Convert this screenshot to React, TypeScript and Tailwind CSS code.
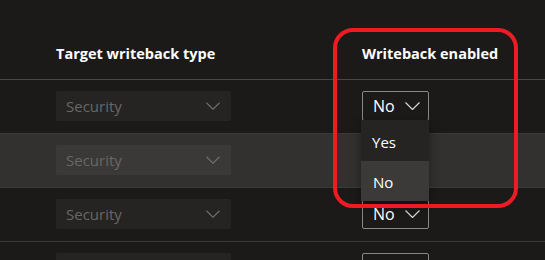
import React from 'react';

const rows = [0, 1, 2, 3];

function Chevron({ className }: { className: string }) {
  return (
    <svg width="15" height="8" viewBox="0 0 15 8" className={className} fill="none">
      <path d="M0.5 0.5 L7.5 7.5 L14.5 0.5" stroke="currentColor" strokeWidth="1.2" />
    </svg>
  );
}

function TypeSelect({ hovered }: { hovered: boolean }) {
  return (
    <div
      className={`w-[175px] h-[30px] rounded-[2px] flex items-center justify-between pl-[10px] pr-[11px] ${
        hovered ? 'bg-[#3a3938]' : 'bg-[#252423]'
      }`}
    >
      <span className="text-[15px] text-[#686766]">Security</span>
      <Chevron className="text-[#6f6e6d] w-[14px] h-[8px]" />
    </div>
  );
}

function EnabledSelect({ open }: { open: boolean }) {
  return (
    <div className="relative w-[67px] h-[30px]">
      <div className="h-[30px] border border-[#8a8886] rounded-[2px] flex items-center justify-between pl-[10px] pr-[8px] bg-[#1b1a19]">
        <span className="text-[16px] text-white">No</span>
        <Chevron className="text-[#d6d6d6]" />
      </div>
      {open && (
        <div className="absolute left-[-1px] top-[29px] w-[68px] z-10 shadow-[0_4px_10px_rgba(0,0,0,0.4)]">
          <div className="h-[41px] bg-[#252423] flex items-center pl-[11px] pt-[4px] text-[15px] text-white">Yes</div>
          <div className="h-[40px] bg-[#3b3a39] flex items-center pl-[12px] pt-[3px] text-[15px] text-white">No</div>
        </div>
      )}
    </div>
  );
}

export default function App() {
  return (
    <div
      className="relative w-[545px] h-[260px] overflow-hidden bg-[#1b1a19]"
      style={{ fontFamily: '"Open Sans", "Noto Sans", sans-serif' }}
    >
      {/* Header */}
      <div className="h-[80px] border-b border-[#4a4847] flex pl-[56px] pt-[43px]">
        <div className="w-[306px] text-[14.5px] font-bold text-white">Target writeback type</div>
        <div className="text-[14.5px] font-bold text-white">Writeback enabled</div>
      </div>

      {/* Rows */}
      {rows.map((i) => (
        <div
          key={i}
          className={`h-[54px] border-b border-[#3b3a39] flex items-start pl-[56px] pt-[11px] ${
            i === 1 ? 'bg-[#323130]' : ''
          }`}
        >
          <div className="w-[306px]">
            <TypeSelect hovered={i === 1} />
          </div>
          <EnabledSelect open={i === 0} />
        </div>
      ))}

      {/* Annotation */}
      <div className="absolute left-[333px] top-[28px] w-[185px] h-[180px] border-4 border-[#ed1c24] rounded-[20px] z-20 pointer-events-none" />
    </div>
  );
}
